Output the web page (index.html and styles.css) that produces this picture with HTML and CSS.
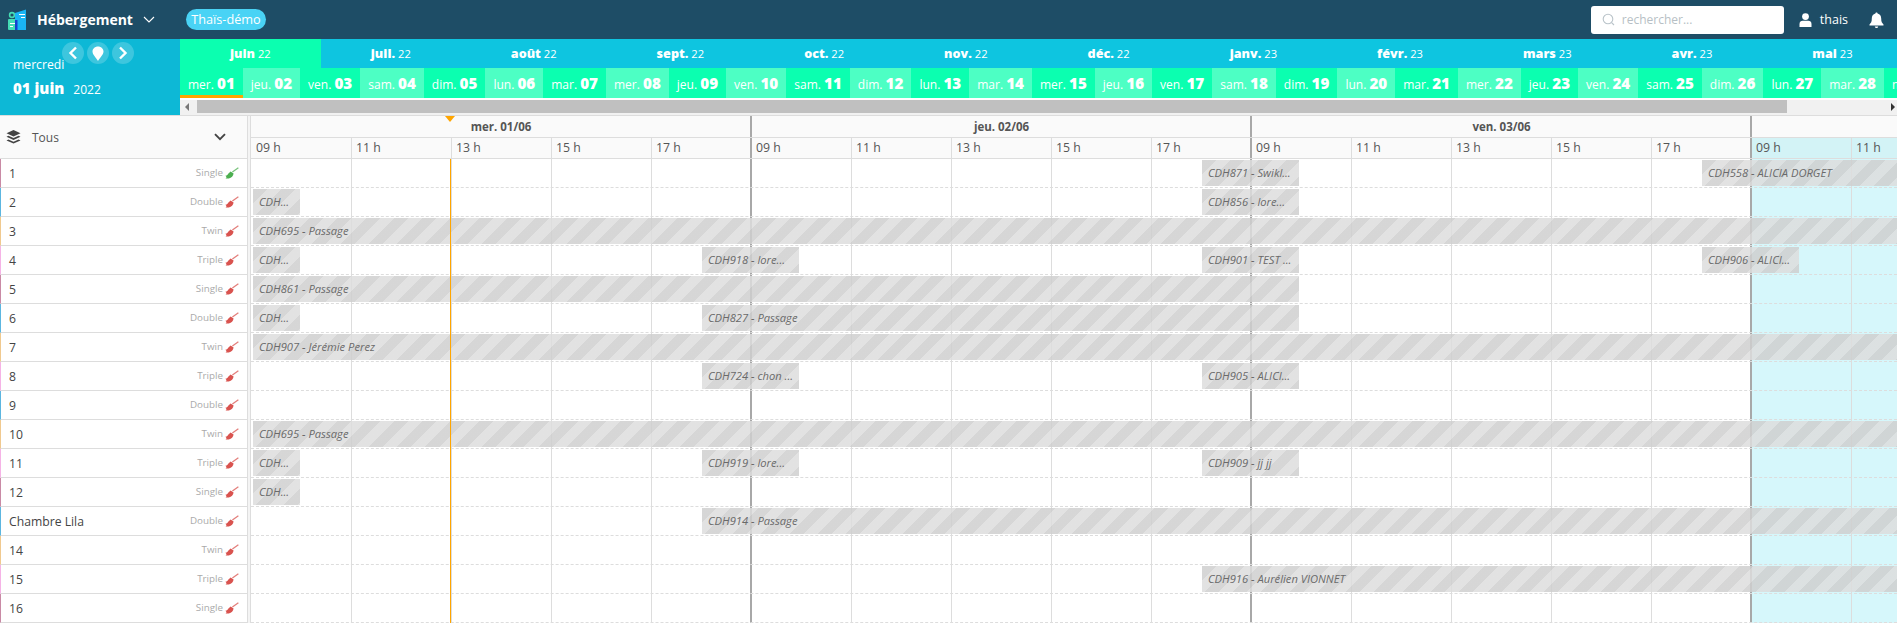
FILE: index.html
```html
<!DOCTYPE html>
<html lang="fr">
<head>
<meta charset="utf-8">
<title>Hébergement</title>
<link rel="stylesheet" href="styles.css">
</head>
<body>
<svg class="defs" width="0" height="0" aria-hidden="true">
  <symbol id="brush" viewBox="0 0 14 12">
    <path d="M0.3 8.6 C1.8 8.8 2.6 7.8 3.2 6.8 L5.6 4.6 L8.6 6.6 C8.2 8.8 6.6 11.2 3.8 11.6 L0.6 11.6 L1.6 10.2Z" fill="currentColor"/>
    <path d="M7.4 5 L13.4 0.8" fill="none" stroke="currentColor" stroke-width="1.3" opacity=".75"/>
  </symbol>
</svg>

<header class="topbar">
  <svg class="logo" width="21" height="23" viewBox="0 0 21 23">
    <rect x="1" y="11" width="9" height="11" rx="1" fill="#45dcb4"/>
    <circle cx="5" cy="7" r="2.4" fill="none" stroke="#45dcb4" stroke-width="1.6"/>
    <path d="M8 5 L19 1.5 V22 H8Z" fill="#19b5f5"/>
    <rect x="12" y="6" width="6" height="1" fill="#fff"/>
    <rect x="14" y="9" width="4" height="1" fill="#fff"/>
    <rect x="8" y="12" width="2.5" height="10" fill="#1540d0"/>
    <rect x="3" y="15" width="5" height="1" fill="#fff"/>
    <rect x="3" y="18" width="3" height="1" fill="#fff"/>
  </svg>
  <span class="app-title">Hébergement</span>
  <svg class="app-caret" width="12" height="7" viewBox="0 0 12 7"><path d="M1 1 L6 6 L11 1" fill="none" stroke="#fff" stroke-width="1.1"/></svg>
  <span class="badge">Thaïs-démo</span>
  <div class="top-right">
    <div class="search">
      <svg width="13" height="13" viewBox="0 0 13 13"><circle cx="6" cy="6" r="4.8" fill="none" stroke="#b9c3c9" stroke-width="1.1"/><path d="M9.6 9.6 L12 12" stroke="#b9c3c9" stroke-width="1.1"/></svg>
      <span>rechercher...</span>
    </div>
    <svg class="user-icon" width="13" height="14" viewBox="0 0 13 14"><circle cx="6.5" cy="3.6" r="3.4" fill="#fff"/><path d="M0.5 14 V11 C0.5 9 2 7.8 3.6 7.8 H9.4 C11 7.8 12.5 9 12.5 11 V14Z" fill="#fff"/></svg>
    <span class="user-name">thais</span>
    <svg class="bell" width="15" height="16" viewBox="0 0 15 16"><path d="M7.5 0.5 C8.2 0.5 8.6 1 8.6 1.6 C11 2.2 12.2 4.2 12.2 6.6 C12.2 10 13 11 14.5 12.6 V13.4 H0.5 V12.6 C2 11 2.8 10 2.8 6.6 C2.8 4.2 4 2.2 6.4 1.6 C6.4 1 6.8 0.5 7.5 0.5Z" fill="#fff"/><path d="M5.8 14.4 H9.2 C9 15.4 8.3 16 7.5 16 C6.7 16 6 15.4 5.8 14.4Z" fill="#fff"/></svg>
  </div>
</header>

<section class="strip">
  <div class="today">
    <div class="today-top">
      <span class="today-day">mercredi</span>
      <div class="nav">
        <span class="nav-btn"><svg width="10" height="14" viewBox="0 0 10 14"><path d="M8 1.5 L2.5 7 L8 12.5" fill="none" stroke="#fff" stroke-width="2.4"/></svg></span>
        <span class="nav-btn"><svg width="12" height="15" viewBox="0 0 12 15"><path d="M6 15 C3.5 11 0.5 8.6 0.5 5.6 C0.5 2.6 3 0.4 6 0.4 C9 0.4 11.5 2.6 11.5 5.6 C11.5 8.6 8.5 11 6 15Z" fill="#fff"/></svg></span>
        <span class="nav-btn"><svg width="10" height="14" viewBox="0 0 10 14"><path d="M2 1.5 L7.5 7 L2 12.5" fill="none" stroke="#fff" stroke-width="2.4"/></svg></span>
      </div>
    </div>
    <div class="today-date"><b>01 juin</b><span>2022</span></div>
  </div>
  <div class="timeline">
    <div class="months">
      <div class="month active"><b>juin</b> 22</div>
      <div class="month"><b>juil.</b> 22</div>
      <div class="month"><b>août</b> 22</div>
      <div class="month"><b>sept.</b> 22</div>
      <div class="month"><b>oct.</b> 22</div>
      <div class="month"><b>nov.</b> 22</div>
      <div class="month"><b>déc.</b> 22</div>
      <div class="month"><b>janv.</b> 23</div>
      <div class="month"><b>févr.</b> 23</div>
      <div class="month"><b>mars</b> 23</div>
      <div class="month"><b>avr.</b> 23</div>
      <div class="month"><b>mai</b> 23</div>
    </div>
    <div class="days">
      <div class="day current">mer. <b>01</b></div>
      <div class="day">jeu. <b>02</b></div>
      <div class="day">ven. <b>03</b></div>
      <div class="day">sam. <b>04</b></div>
      <div class="day">dim. <b>05</b></div>
      <div class="day">lun. <b>06</b></div>
      <div class="day">mar. <b>07</b></div>
      <div class="day">mer. <b>08</b></div>
      <div class="day">jeu. <b>09</b></div>
      <div class="day">ven. <b>10</b></div>
      <div class="day">sam. <b>11</b></div>
      <div class="day">dim. <b>12</b></div>
      <div class="day">lun. <b>13</b></div>
      <div class="day">mar. <b>14</b></div>
      <div class="day">mer. <b>15</b></div>
      <div class="day">jeu. <b>16</b></div>
      <div class="day">ven. <b>17</b></div>
      <div class="day">sam. <b>18</b></div>
      <div class="day">dim. <b>19</b></div>
      <div class="day">lun. <b>20</b></div>
      <div class="day">mar. <b>21</b></div>
      <div class="day">mer. <b>22</b></div>
      <div class="day">jeu. <b>23</b></div>
      <div class="day">ven. <b>24</b></div>
      <div class="day">sam. <b>25</b></div>
      <div class="day">dim. <b>26</b></div>
      <div class="day">lun. <b>27</b></div>
      <div class="day">mar. <b>28</b></div>
      <div class="day">mer. <b>29</b></div>
    </div>
    <div class="scrollbar">
      <span class="arrow arrow-left"></span>
      <span class="thumb"></span>
      <span class="arrow arrow-right"></span>
    </div>
  </div>
</section>

<main class="planner">
  <aside class="side">
    <div class="side-head">
      <svg width="15" height="14" viewBox="0 0 15 14"><path d="M7.5 0 L14.5 3.2 L7.5 6.4 L0.5 3.2Z" fill="#444"/><path d="M2.4 5.8 L7.5 8.1 L12.6 5.8 L14.5 6.8 L7.5 10 L0.5 6.8Z" fill="#444"/><path d="M2.4 9.4 L7.5 11.7 L12.6 9.4 L14.5 10.4 L7.5 13.6 L0.5 10.4Z" fill="#444"/></svg>
      <span class="side-filter">Tous</span>
      <svg width="12" height="8" viewBox="0 0 12 8"><path d="M1 1.2 L6 6.2 L11 1.2" fill="none" stroke="#444" stroke-width="1.9"/></svg>
    </div>
    <div class="room c-pink"><span class="room-name">1</span><span class="room-type">Single</span><svg class="brush ok"><use href="#brush"/></svg></div>
    <div class="room c-blue"><span class="room-name">2</span><span class="room-type">Double</span><svg class="brush"><use href="#brush"/></svg></div>
    <div class="room c-sand"><span class="room-name">3</span><span class="room-type">Twin</span><svg class="brush"><use href="#brush"/></svg></div>
    <div class="room c-rose"><span class="room-name">4</span><span class="room-type">Triple</span><svg class="brush"><use href="#brush"/></svg></div>
    <div class="room c-pink"><span class="room-name">5</span><span class="room-type">Single</span><svg class="brush"><use href="#brush"/></svg></div>
    <div class="room c-blue"><span class="room-name">6</span><span class="room-type">Double</span><svg class="brush"><use href="#brush"/></svg></div>
    <div class="room c-sand"><span class="room-name">7</span><span class="room-type">Twin</span><svg class="brush"><use href="#brush"/></svg></div>
    <div class="room c-rose"><span class="room-name">8</span><span class="room-type">Triple</span><svg class="brush"><use href="#brush"/></svg></div>
    <div class="room c-blue"><span class="room-name">9</span><span class="room-type">Double</span><svg class="brush"><use href="#brush"/></svg></div>
    <div class="room c-sand"><span class="room-name">10</span><span class="room-type">Twin</span><svg class="brush"><use href="#brush"/></svg></div>
    <div class="room c-rose"><span class="room-name">11</span><span class="room-type">Triple</span><svg class="brush"><use href="#brush"/></svg></div>
    <div class="room c-pink"><span class="room-name">12</span><span class="room-type">Single</span><svg class="brush"><use href="#brush"/></svg></div>
    <div class="room c-blue"><span class="room-name">Chambre Lila</span><span class="room-type">Double</span><svg class="brush"><use href="#brush"/></svg></div>
    <div class="room c-sand"><span class="room-name">14</span><span class="room-type">Twin</span><svg class="brush"><use href="#brush"/></svg></div>
    <div class="room c-rose"><span class="room-name">15</span><span class="room-type">Triple</span><svg class="brush"><use href="#brush"/></svg></div>
    <div class="room c-pink"><span class="room-name">16</span><span class="room-type">Single</span><svg class="brush"><use href="#brush"/></svg></div>
  </aside>
  <div class="gutter"></div>
  <div class="board">
    <div class="now-mark"></div>
    <div class="date-row">
      <div class="date-cell">mer. 01/06</div>
      <div class="date-cell">jeu. 02/06</div>
      <div class="date-cell">ven. 03/06</div>
      <div class="date-cell"></div>
    </div>
    <div class="hour-row">
      <div class="hour">09 h</div><div class="hour line">11 h</div><div class="hour line">13 h</div><div class="hour line">15 h</div><div class="hour line">17 h</div>
      <div class="hour heavy">09 h</div><div class="hour line">11 h</div><div class="hour line">13 h</div><div class="hour line">15 h</div><div class="hour line">17 h</div>
      <div class="hour heavy">09 h</div><div class="hour line">11 h</div><div class="hour line">13 h</div><div class="hour line">15 h</div><div class="hour line">17 h</div>
      <div class="hour heavy off">09 h</div><div class="hour line off">11 h</div>
    </div>
    <div class="grid">
      <div class="columns">
        <div class="col"></div><div class="col line"></div><div class="col line"></div><div class="col line"></div><div class="col line"></div>
        <div class="col heavy"></div><div class="col line"></div><div class="col line"></div><div class="col line"></div><div class="col line"></div>
        <div class="col heavy"></div><div class="col line"></div><div class="col line"></div><div class="col line"></div><div class="col line"></div>
        <div class="col heavy off"></div><div class="col line off"></div>
      </div>
      <div class="now-line"></div>
      <div class="lane"><div class="stay at-d3 len-m">CDH871 - Swikl...</div><div class="stay at-d6 len-open">CDH558 - ALICIA DORGET</div></div>
      <div class="lane"><div class="stay at-d1 len-s">CDH...</div><div class="stay at-d3 len-m">CDH856 - lore...</div></div>
      <div class="lane"><div class="stay at-d1 len-full">CDH695 - Passage</div></div>
      <div class="lane"><div class="stay at-d1 len-s">CDH...</div><div class="stay at-d2 len-m">CDH918 - lore...</div><div class="stay at-d3 len-m">CDH901 - TEST ...</div><div class="stay at-d6 len-m">CDH906 - ALICI...</div></div>
      <div class="lane"><div class="stay at-d1 len-long">CDH861 - Passage</div></div>
      <div class="lane"><div class="stay at-d1 len-s">CDH...</div><div class="stay at-d2 len-mid">CDH827 - Passage</div></div>
      <div class="lane"><div class="stay at-d1 len-full">CDH907 - Jérémie Perez</div></div>
      <div class="lane"><div class="stay at-d2 len-m">CDH724 - chon ...</div><div class="stay at-d3 len-m">CDH905 - ALICI...</div></div>
      <div class="lane"></div>
      <div class="lane"><div class="stay at-d1 len-full">CDH695 - Passage</div></div>
      <div class="lane"><div class="stay at-d1 len-s">CDH...</div><div class="stay at-d2 len-m">CDH919 - lore...</div><div class="stay at-d3 len-m">CDH909 - jj jj</div></div>
      <div class="lane"><div class="stay at-d1 len-s">CDH...</div></div>
      <div class="lane"><div class="stay at-d2 len-full">CDH914 - Passage</div></div>
      <div class="lane"></div>
      <div class="lane"><div class="stay at-d3 len-full">CDH916 - Aurélien VIONNET</div></div>
      <div class="lane"></div>
    </div>
  </div>
</main>
</body>
</html>
```

FILE: styles.css
```css
* { box-sizing: border-box; }
html, body { margin: 0; height: 100%; }
body {
  overflow: hidden;
  background: #fff;
  color: #444;
  font-family: "Open Sans", "Noto Sans", sans-serif;
  font-size: 14px;
}
.defs { display: block; position: absolute; }

/* top bar */
.topbar {
  display: flex;
  align-items: center;
  height: 39px;
  padding-left: 7px;
  background: #1e4d66;
  color: #fff;
}
.logo { flex: none; }
.app-title { margin-left: 9px; font-size: 14px; font-weight: 700; }
.app-caret { margin-left: 10px; }
.badge {
  margin-left: 31px;
  height: 21px;
  width: 80px;
  border-radius: 11px;
  background: #49d3f5;
  font-size: 12.7px;
  line-height: 21px;
  text-align: center;
}
.top-right { display: flex; align-items: center; margin-left: auto; }
.search {
  display: flex;
  align-items: center;
  gap: 7px;
  width: 193px;
  height: 28px;
  padding-left: 11px;
  border-radius: 3px;
  background: #fff;
  color: #b7bfc5;
  font-size: 12px;
}
.user-icon { margin-left: 15px; }
.user-name { margin-left: 8px; font-size: 12.5px; }
.bell { margin-left: 21px; margin-right: 13px; }

/* date strip */
.strip { display: flex; height: 76px; }
.today {
  flex: none;
  width: 180px;
  padding: 3px 0 0 13px;
  background: #0db8d6;
  color: #fff;
}
.today-top { display: flex; height: 31px; }
.today-day { align-self: flex-end; font-size: 12.2px; line-height: 18px; margin-bottom: -1px; width: 49px; white-space: nowrap; }
.nav { display: flex; gap: 3px; }
.nav-btn {
  display: flex;
  align-items: center;
  justify-content: center;
  width: 22px;
  height: 22px;
  border-radius: 50%;
  background: rgba(255, 255, 255, .2);
}
.today-date { display: flex; align-items: baseline; gap: 9px; margin-top: 5px; font-size: 12px; }
.today-date b { font-size: 15px; font-weight: 800; }
.timeline { flex: 1; min-width: 0; overflow: hidden; }
.months { display: flex; height: 29px; background: #0ec5e0; color: #fff; white-space: nowrap; }
.month { flex: none; padding: 0 50px; font-size: 11.2px; line-height: 30px; }
.month b { font-size: 12.6px; font-weight: 800; }
.month.active { background: #0bffb0; }
.days { display: flex; height: 30px; color: #fff; white-space: nowrap; }
.day {
  flex: none;
  padding: 0 8px;
  background: #0bffb0;
  font-size: 12px;
  line-height: 30px;
}
.day b { font-size: 15.2px; font-weight: 800; }
.day:nth-child(even) { background: #4dffc4; }
.day.current { box-shadow: inset 0 -3px 0 #ffa500; }
.scrollbar {
  display: flex;
  align-items: center;
  height: 15px;
  margin-top: 2px;
  padding-bottom: 2px;
  background: #f1f1f1;
  position: relative;
}
.thumb { display: block; width: 1590px; height: 13px; margin-left: 8px; background: #c0c0c0; }
.arrow { display: block; width: 0; height: 0; border-style: solid; border-color: transparent; }
.arrow-left { margin-left: 5px; border-width: 4px 4px 4px 0; border-right-color: #777; margin-right: 0; }
.arrow-right { margin-left: auto; margin-right: 2px; border-width: 4px 0 4px 4px; border-left-color: #333; }

/* planner */
.planner { display: flex; height: 508px; overflow: hidden; border-top: 1px solid #ddd; }
.side { flex: none; width: 248px; border-right: 1px solid #ddd; }
.gutter { flex: none; width: 3px; background: #f4f4f4; border-right: 1px solid #ddd; }
.side-head {
  display: flex;
  align-items: center;
  height: 43px;
  padding: 0 21px 0 6px;
  background: #fafafa;
  border-bottom: 1px solid #ddd;
}
.side-filter { flex: 1; margin-left: 11px; font-size: 12px; color: #555; }
.room {
  display: flex;
  align-items: center;
  height: 29px;
  padding-left: 8px;
  padding-right: 8px;
  border-left: 1px solid;
  border-bottom: 1px solid #ddd;
}
.c-pink { border-left-color: #c98aa5; }
.c-blue { border-left-color: #5cb6e0; }
.c-sand { border-left-color: #f0c98f; }
.c-rose { border-left-color: #f5b3e6; }
.room-name { flex: 1; font-size: 12.2px; color: #444; }
.room-type { font-size: 9.8px; color: #aaa; margin-top: -2px; }
.brush { width: 14px; height: 12px; margin-left: 2px; margin-top: -1px; color: #d9534f; }
.brush.ok { color: #4caf50; }

.board { flex: 1; min-width: 0; position: relative; overflow: hidden; }
.now-mark {
  position: absolute;
  left: 194px;
  top: 0;
  width: 0;
  height: 0;
  border-style: solid;
  border-width: 6px 5px 0;
  border-color: #ffa500 transparent transparent;
}
.date-row { display: flex; height: 22px; background: #fafafa; border-bottom: 1px solid #ddd; }
.date-cell {
  flex: none;
  width: 500px;
  border-left: 1px solid #a8a8a8;
  box-shadow: -1px 0 0 #a8a8a8;
  font-size: 11.5px;
  font-weight: 700;
  line-height: 21px;
  text-align: center;
  color: #555;
}
.date-cell:first-child { border-left: 0; box-shadow: none; }
.hour-row { display: flex; height: 21px; background: #fafafa; border-bottom: 1px solid #ddd; }
.hour { flex: none; width: 100px; padding-left: 5px; font-size: 12.3px; line-height: 20px; color: #555; }
.hour.line { border-left: 1px solid #ddd; padding-left: 4px; }
.hour.heavy { border-left: 1px solid #a8a8a8; box-shadow: -1px 0 0 #a8a8a8; padding-left: 4px; }
.hour.off { background: #d3f3f6; }
.grid { position: relative; }
.columns { position: absolute; inset: 0; display: flex; }
.col { flex: none; width: 100px; }
.col.line { border-left: 1px solid #ddd; }
.col.heavy { border-left: 1px solid #a8a8a8; box-shadow: -1px 0 0 #a8a8a8; }
.col.off { background: #d6f7fb; }
.now-line { position: absolute; z-index: 2; left: 199px; top: 0; bottom: 0; width: 1px; background: #ffa500; }
.lane { position: relative; height: 29px; border-bottom: 1px dashed #ddd; }
.stay {
  position: absolute;
  top: 1px;
  height: 26px;
  padding-left: 6px;
  overflow: hidden;
  white-space: nowrap;
  font-size: 11.2px;
  font-style: italic;
  line-height: 25px;
  color: #6a6a6a;
  background: repeating-linear-gradient(135deg, rgba(207, 207, 207, .85) 0 10px, rgba(221, 221, 221, .85) 10px 20px);
}
.at-d1 { left: 2px; }
.at-d2 { left: 451px; }
.at-d3 { left: 951px; }
.at-d6 { left: 1451px; }
.len-s { width: 47px; }
.len-m { width: 97px; }
.len-mid { width: 597px; }
.len-long { width: 1046px; }
.len-open { width: 200px; }
.len-full { width: 1700px; }
```
